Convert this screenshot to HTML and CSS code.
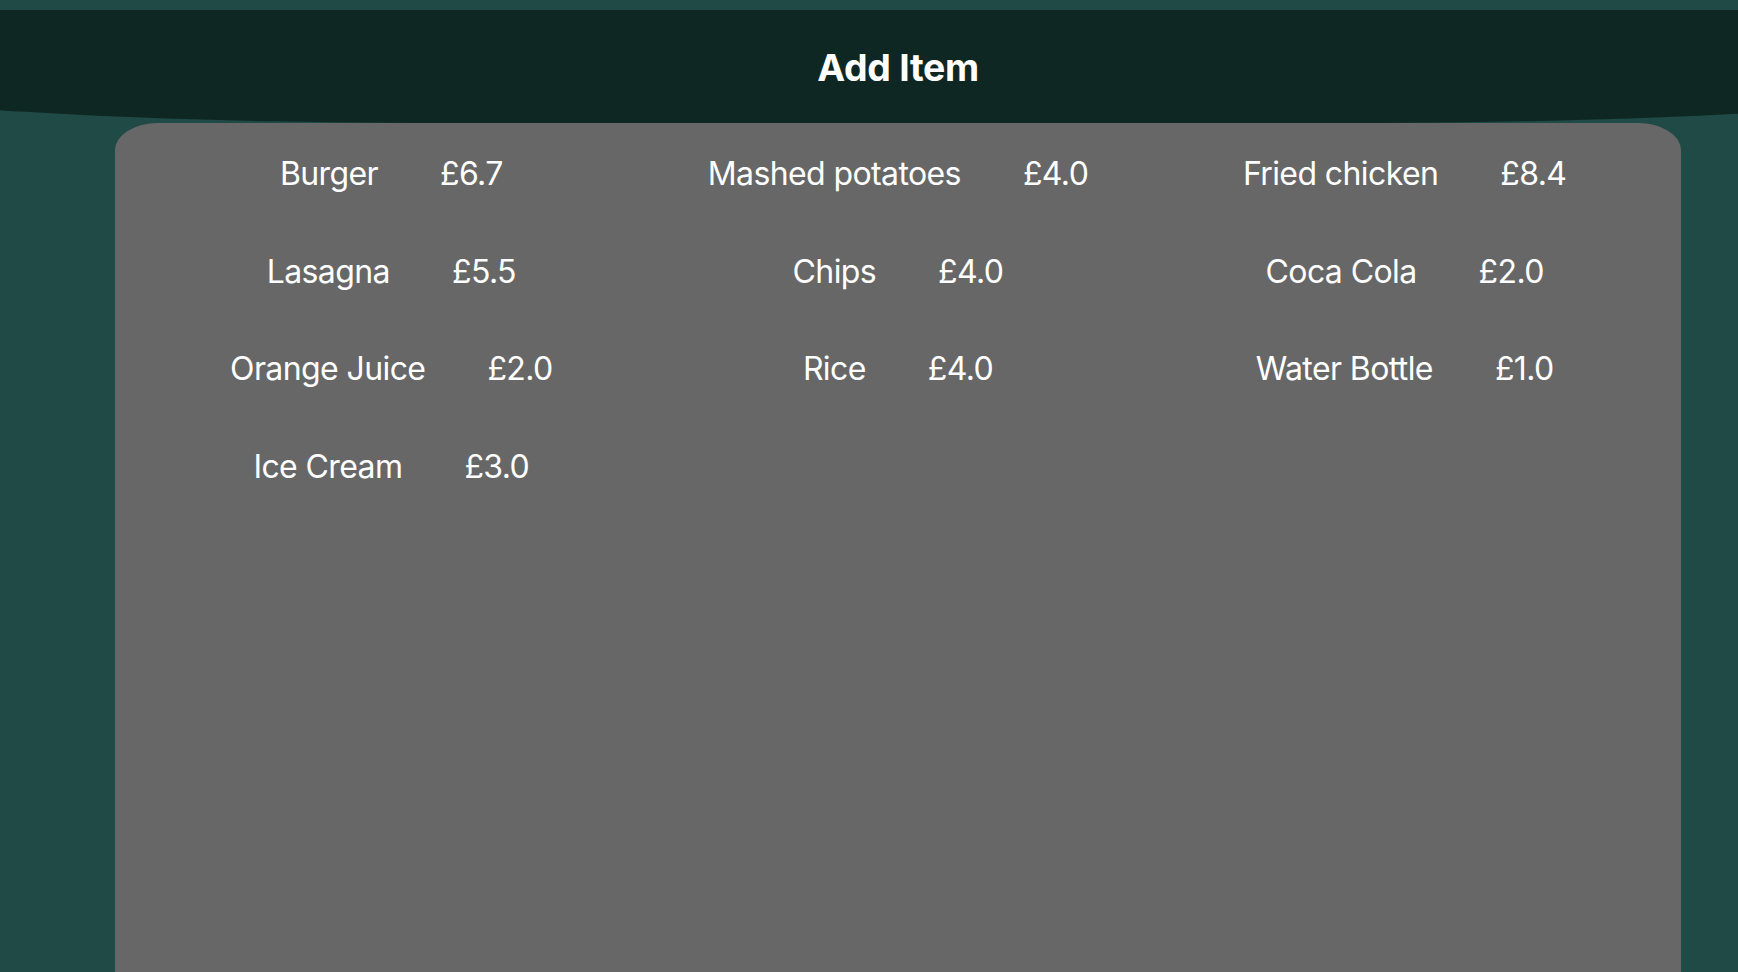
FILE: index.html
```html
<!DOCTYPE html>
<html lang="en">
<head>
<meta charset="utf-8">
<title>Add Item</title>
<link rel="stylesheet" href="styles.css">
</head>
<body>
<div class="page">
  <header class="topbar">
    <h3 class="title">Add Item</h3>
  </header>
  <main class="card">
    <div class="grid">
      <div class="item"><span class="name">Burger</span><span class="price">£6.7</span></div>
      <div class="item"><span class="name">Mashed potatoes</span><span class="price">£4.0</span></div>
      <div class="item"><span class="name">Fried chicken</span><span class="price">£8.4</span></div>
      <div class="item"><span class="name">Lasagna</span><span class="price">£5.5</span></div>
      <div class="item"><span class="name">Chips</span><span class="price">£4.0</span></div>
      <div class="item"><span class="name">Coca Cola</span><span class="price">£2.0</span></div>
      <div class="item"><span class="name">Orange Juice</span><span class="price">£2.0</span></div>
      <div class="item"><span class="name">Rice</span><span class="price">£4.0</span></div>
      <div class="item"><span class="name">Water Bottle</span><span class="price">£1.0</span></div>
      <div class="item"><span class="name">Ice Cream</span><span class="price">£3.0</span></div>
    </div>
  </main>
</div>
</body>
</html>
```

FILE: styles.css
```css
html {
  overflow: hidden;
}
body {
  margin: 0;
  background: #1f4a45;
  font-family: Inter, "Noto Sans", "Liberation Sans", sans-serif;
  color: #ffffff;
}
.page {
  width: 1796px;
  padding-top: 10px;
}
.topbar {
  margin: 0 -150px;
  height: 113px;
  box-sizing: border-box;
  padding-top: 4px;
  background: #0f2723;
  border-radius: 0 0 600px 600px / 0 0 38px 38px;
  display: flex;
  align-items: center;
  justify-content: center;
  position: relative;
  z-index: 1;
}
.title {
  margin: 0;
  font-size: 37.44px;
  font-weight: 700;
  line-height: 1.2;
  letter-spacing: -0.3px;
}
.card {
  margin: 0 115px;
  height: 1000px;
  background: #676767;
  border-radius: 43px 43px 0 0 / 27px 27px 0 0;
  padding: 32px 23px 0;
}
.grid {
  display: grid;
  grid-template-columns: repeat(3, 1fr);
  row-gap: 59.2px;
}
.item {
  display: flex;
  justify-content: center;
  gap: 62px;
  font-size: 32px;
  line-height: 38.4px;
  letter-spacing: -0.6px;
}
```
